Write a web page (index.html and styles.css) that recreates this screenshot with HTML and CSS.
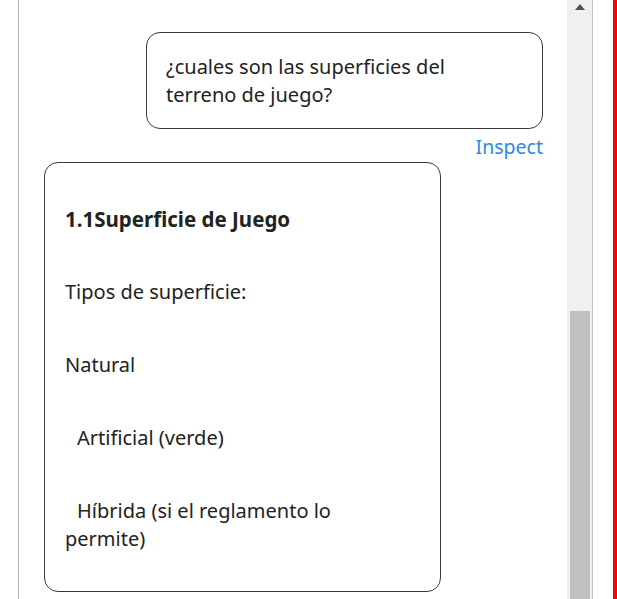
FILE: index.html
```html
<!DOCTYPE html>
<html>
<head>
<meta charset="utf-8">
<link rel="stylesheet" href="styles.css">
</head>
<body>
<div class="frame">
  <div class="panel">
    <div class="chat">
      <div class="msg-user">
        <div class="bubble user">¿cuales son las superficies del terreno de juego?</div>
        <div class="inspect">Inspect</div>
      </div>
      <div class="bubble bot">
        <p class="title">1.1Superficie de Juego</p>
        <p>Tipos de superficie:</p>
        <p>Natural</p>
        <p class="indent">Artificial (verde)</p>
        <p class="indent">Híbrida (si el reglamento lo permite)</p>
      </div>
    </div>
    <div class="scrollbar">
      <div class="arrow"></div>
      <div class="track-space"></div>
      <div class="thumb"></div>
    </div>
  </div>
  <div class="gap"></div>
</div>
</body>
</html>
```
FILE: styles.css
```css
html, body {
  margin: 0;
  padding: 0;
  background: #fff;
  height: 599px;
  overflow: hidden;
}
.frame {
  display: flex;
  height: 599px;
  padding-left: 18px;
  border-right: 4px solid #ff0000;
  box-sizing: border-box;
  width: 617px;
}
.panel {
  display: flex;
  width: 575px;
  border-left: 1px solid #b4b4b4;
  border-right: 1px solid #c4c4c4;
  box-sizing: border-box;
  height: 599px;
  overflow: hidden;
}
.gap {
  flex: 1;
}
.chat {
  flex: 1;
  padding: 32px 24px 0 25px;
  font-family: "Noto Sans", "Open Sans", sans-serif;
  font-size: 20px;
  color: #222;
  line-height: 28px;
}
.msg-user {
  display: flex;
  flex-direction: column;
  align-items: flex-end;
}
.bubble {
  width: 397px;
  box-sizing: border-box;
  border: 1.5px solid #3a3a3a;
  border-radius: 14px;
}
.user {
  padding: 20px 40px 19px 19px;
}
.inspect {
  color: #2a8be0;
  font-size: 19.5px;
  margin-top: 4px;
  line-height: 28px;
}
.bot {
  margin-top: 1px;
  padding: 42px 40px 38px 20px;
}
.bot p {
  margin: 0 0 45px 0;
}
.bot p:last-child {
  margin-bottom: 0;
}
.bot .title {
  font-weight: bold;
  font-size: 20.5px;
}
.bot .indent {
  text-indent: 12px;
}
.scrollbar {
  width: 25px;
  background: #f0f0f0;
  display: flex;
  flex-direction: column;
  align-items: center;
  flex-shrink: 0;
}
.arrow {
  margin-top: 4px;
  width: 0;
  height: 0;
  border-left: 5px solid transparent;
  border-right: 5px solid transparent;
  border-bottom: 6px solid #505050;
}
.track-space {
  height: 301px;
}
.thumb {
  width: 20px;
  flex: 1;
  background: #c1c1c1;
}
```
